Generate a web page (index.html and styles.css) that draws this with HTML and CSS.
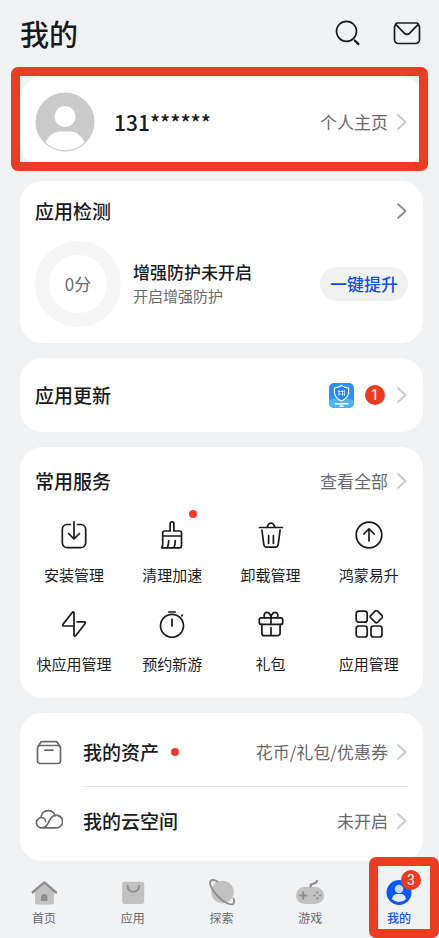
FILE: index.html
```html
<!DOCTYPE html>
<html lang="zh-CN">
<head>
<meta charset="utf-8">
<meta name="viewport" content="width=device-width, initial-scale=1">
<title>我的</title>
<link rel="stylesheet" href="styles.css">
</head>
<body>
<svg class="defs" aria-hidden="true">
  <symbol id="chevron" viewBox="0 0 12 18"><path d="M2 2l7.500 7L2 16"/></symbol>
</svg>

<header class="header">
  <h1 class="title">我的</h1>
  <div class="actions">
    <button class="icon-button" type="button" aria-label="搜索">
      <svg class="icon" viewBox="0 0 28 28"><circle cx="13.500" cy="12.300" r="10"/><path d="M21.800 21.500l3.600 3.600" stroke-width="2.200"/></svg>
    </button>
    <button class="icon-button" type="button" aria-label="消息">
      <svg class="icon" viewBox="0 0 28 28"><path d="M2.500 5.500L1.500 8v12.500a4 4 0 0 0 4 4h17a4 4 0 0 0 4-4V8l-1-2.500M4.500 4h19c1.800 0 2 1.200 1 2.200L16.500 14.300a3.500 3.500 0 0 1-5 0L3.500 6.200C2.500 5.200 2.700 4 4.500 4z"/></svg>
    </button>
  </div>
</header>

<main class="cards">
  <section class="card profile">
    <svg class="avatar" viewBox="0 0 60 60" aria-hidden="true"><circle cx="30" cy="30" r="29.500" fill="#cacaca"/><circle cx="30" cy="24.500" r="10.500" fill="#fff"/><path d="M10.500 50.500C14 43 19 39.500 25 39.500h10c6 0 11 3.500 14.500 11A28.500 28.500 0 0 1 10.500 50.500z" fill="#fff"/></svg>
    <span class="phone">131******</span>
    <a class="more" href="#home">个人主页<svg class="chevron"><use href="#chevron"/></svg></a>
    <span class="frame frame-profile"></span>
  </section>

  <section class="card check">
    <div class="card-head">
      <h2 class="heading">应用检测</h2>
      <a class="more dark" href="#check" aria-label="应用检测详情"><svg class="chevron"><use href="#chevron"/></svg></a>
    </div>
    <div class="check-body">
      <div class="ring">0分</div>
      <div class="check-text">
        <p class="check-title">增强防护未开启</p>
        <p class="check-sub">开启增强防护</p>
      </div>
      <button class="pill" type="button">一键提升</button>
    </div>
  </section>

  <section class="card update">
    <h2 class="heading">应用更新</h2>
    <a class="more update-more" href="#update" aria-label="1 个应用更新">
      <svg class="app-icon" viewBox="0 0 25 25"><rect width="25" height="25" rx="5" fill="#2d8ff0"/><path d="M0 17q12-4 25 0v3a5 5 0 0 1-5 5H5a5 5 0 0 1-5-5z" fill="#49b4fa"/><path d="M12.500 2.500q3 2.300 7 2.500v4.500c0 4-3 6.500-7 8.500-4-2-7-4.500-7-8.500V5q4-.2 7-2.500z" fill="#2383e6" stroke="#fff" stroke-width="1.200"/><path d="M10 7v6M13.500 7v6M15.500 7v6M9 8.500h7M9 11h7" stroke="#d5eaff" stroke-width=".8"/><path d="M5.500 20.700h14M10.500 23h4" stroke="#fff" stroke-width="1.500"/></svg>
      <span class="badge">1</span>
      <svg class="chevron"><use href="#chevron"/></svg>
    </a>
  </section>

  <section class="card services">
    <div class="card-head">
      <h2 class="heading">常用服务</h2>
      <a class="more" href="#all">查看全部<svg class="chevron"><use href="#chevron"/></svg></a>
    </div>
    <nav class="grid">
      <a class="service" href="#install"><svg class="icon" viewBox="0 0 28 28"><path d="M10.500 3.500H7A5 5 0 0 0 2.300 8.500v13.200a5 5 0 0 0 5 5h13.400a5 5 0 0 0 5-5V8.500A5 5 0 0 0 21 3.500h-3.500M14 .8v17M8.500 12.500L14 18l5.500-5.500"/></svg>安装管理</a>
      <a class="service" href="#clean"><svg class="icon" viewBox="0 0 28 28"><path d="M12.100 10V2.800a1.900 1.900 0 0 1 3.800 0V10h5.600a2 2 0 0 1 2 2v12.800a2 2 0 0 1-2 2H3.700q1.300-2 1-5V12a2 2 0 0 1 2-2zM4.700 15h18.800M10.700 19.500c0 3-.2 5-1.400 7M17.300 19.500c0 3-.2 5-1.400 7"/></svg>清理加速<span class="dot dot-corner"></span></a>
      <a class="service" href="#uninstall"><svg class="icon" viewBox="0 0 28 28"><path d="M2.500 6.500h23M9.800 6.500C11 6 10.200 2.200 14 2.200S17 6 18.200 6.500M4.900 9l1.900 14.500a3 3 0 0 0 3 2.600h8.400a3 3 0 0 0 3-2.600L23.100 9M11.600 14.500v8M16.400 14.500v8"/></svg>卸载管理</a>
      <a class="service" href="#upgrade"><svg class="icon" viewBox="0 0 28 28"><circle cx="14" cy="14" r="12.800"/><path d="M14 20V8M8.800 13L14 7.800l5.200 5.200"/></svg>鸿蒙易升</a>
      <a class="service" href="#quick"><svg class="icon" viewBox="0 0 28 28"><path d="M14 16H3.700c-1.200 0-1.400-.8-.8-1.600L12.300 2.500c.8-.9 1.700-.6 1.700.6v22c0 1.200.9 1.500 1.700.6l9.400-12.300c.6-.8.400-1.600-.8-1.600H17"/></svg>快应用管理</a>
      <a class="service" href="#reserve"><svg class="icon" viewBox="0 0 28 28"><circle cx="14" cy="15.800" r="11.500"/><path d="M10.800 2h6.400M14 9v7M23.800 5.800l.6-.6"/></svg>预约新游</a>
      <a class="service" href="#gift"><svg class="icon" viewBox="0 0 28 28"><rect x="2.300" y="7.800" width="23.400" height="6.600" rx="2"/><path d="M4.900 14.400v8.800a2.500 2.500 0 0 0 2.500 2.500h13.200a2.500 2.500 0 0 0 2.500-2.500v-8.800M14 7.800v6.600M14 17.500v8M7.700 7.800C6.300 5.500 7.500 2.300 10 2.300S14 5.800 14 7.800c0-2 1.500-5.500 4-5.500s3.700 3.200 2.300 5.500"/></svg>礼包</a>
      <a class="service" href="#apps"><svg class="icon" viewBox="0 0 28 28"><rect x="1.200" y="1.200" width="11" height="11" rx="2.500"/><rect x="1.200" y="16" width="11" height="11" rx="2.500"/><rect x="16" y="16" width="11" height="11" rx="2.500"/><rect x="16.600" y="1.900" width="9.600" height="9.600" rx="1.500" transform="rotate(45 21.400 6.700)"/></svg>应用管理</a>
    </nav>
  </section>

  <section class="card list">
    <a class="row" href="#assets">
      <svg class="icon gray" viewBox="0 0 28 28"><rect x="2.500" y="7.500" width="23" height="18" rx="2.500"/><path d="M3 8.500l2.500-3.800q.5-1 1.700-1h13.600q1.200 0 1.700 1L25 8.500M10 12.200h8"/></svg>
      <span class="row-body"><span class="heading">我的资产</span><span class="dot"></span><span class="more">花币/礼包/优惠券<svg class="chevron"><use href="#chevron"/></svg></span></span>
    </a>
    <a class="row" href="#cloud">
      <svg class="icon gray" viewBox="0 0 28 28"><path d="M9.500 20A5.200 5.200 0 1 1 6 10.500c2.500 0 4.300 1.600 4.600 4M6 10.500C6.300 6.200 9.300 3.700 13 3.700c3.600 0 6.300 2 7.200 5.200M8 20.800c5-.6 5.500-7.800 8.600-10.400a6.300 6.300 0 1 1 3.900 10.400H8"/></svg>
      <span class="row-body"><span class="heading">我的云空间</span><span class="more">未开启<svg class="chevron"><use href="#chevron"/></svg></span></span>
    </a>
  </section>
</main>

<nav class="tabs">
  <a class="tab" href="#t1"><svg class="tab-icon" viewBox="0 0 28 28"><path d="M5 14l9.300-7.500L24 14v10a2.500 2.500 0 0 1-2.500 2.500h-14A2.500 2.500 0 0 1 5 24z" fill="#c1c1c2"/><path d="M2.800 14.300L14.300 4.500l11.500 9.800" fill="none" stroke="#8f8f91" stroke-width="2.600" stroke-linecap="round" stroke-linejoin="round"/><path d="M11 23v-3.500a3.200 3.200 0 0 1 6.400 0V23z" fill="#8f8f91"/></svg>首页</a>
  <a class="tab" href="#t2"><svg class="tab-icon" viewBox="0 0 28 28"><rect x="3.200" y="3.700" width="22" height="22.300" rx="2.800" fill="#c1c1c2"/><path d="M8.500 8a5.800 5.800 0 0 0 11.600 0" fill="none" stroke="#8f8f91" stroke-width="2" stroke-linecap="round"/></svg>应用</a>
  <a class="tab" href="#t3"><svg class="tab-icon" viewBox="0 0 28 28"><circle cx="14.500" cy="14" r="11.300" fill="#c1c1c2"/><path d="M9.500 3.500C6 1.500 3 1.500 2.300 3.500 1.200 7 5 13.500 10 18.500s12 9.200 15 7.500c1.600-1 1.500-3 .5-5.500" fill="none" stroke="#8f8f91" stroke-width="1.800" stroke-linecap="round"/></svg>探索</a>
  <a class="tab" href="#t4"><svg class="tab-icon" viewBox="0 0 28 28"><rect x="0" y="9" width="28" height="17" rx="8.500" fill="#c1c1c2"/><path d="M14.500 8.500c-.5-5 6-1 6.500-5.500" fill="none" stroke="#8f8f91" stroke-width="2.200" stroke-linecap="round"/><path d="M4 17.500h6.400M7.200 14.300v6.400" stroke="#8f8f91" stroke-width="2" stroke-linecap="round"/><g fill="#8f8f91"><circle cx="21.300" cy="14.600" r="1.100"/><circle cx="21.300" cy="20.400" r="1.100"/><circle cx="18.400" cy="17.500" r="1.100"/><circle cx="24.200" cy="17.500" r="1.100"/></g></svg>游戏</a>
  <a class="tab active" href="#t5" aria-current="page"><svg class="tab-icon" viewBox="0 0 28 28"><circle cx="14" cy="14.500" r="12.500" fill="#0a59f7"/><circle cx="14" cy="11" r="4.300" fill="#c5d8fb"/><path d="M6.800 21q1.500-5 5.200-5h4q3.700 0 5.200 5-3 3-7.200 3t-7.200-3z" fill="#e3ecfd"/></svg>我的<span class="badge badge-tab">3</span></a>
  <span class="frame frame-tab"></span>
</nav>
</body>
</html>
```
FILE: styles.css
```css
* {
  box-sizing: border-box;
}

body {
  margin: 0;
  background: #f1f2f4;
  color: #191a1c;
  font-family: "Noto Sans CJK SC", sans-serif;
  font-size: 15px;
  line-height: 20px;
}

a {
  color: inherit;
  text-decoration: none;
}

button {
  border: 0;
  padding: 0;
  font: inherit;
  color: inherit;
  cursor: pointer;
}

h1,
h2,
p {
  margin: 0;
}

.defs {
  display: none;
}

.icon {
  display: block;
  flex: none;
  width: 28px;
  height: 28px;
  fill: none;
  stroke: currentColor;
  stroke-width: 1.7;
  stroke-linecap: round;
  stroke-linejoin: round;
}

.icon.gray {
  color: #68696b;
}

.header {
  display: flex;
  align-items: center;
  justify-content: space-between;
  height: 67px;
  padding: 0 18px 2px 20px;
}

.title {
  font-size: 29px;
  line-height: 40px;
  font-weight: 500;
}

.actions {
  display: flex;
  gap: 32px;
}

.icon-button {
  background: none;
}

.cards {
  display: flex;
  flex-direction: column;
  gap: 15px;
  padding: 10px 16px 0 20px;
}

.card {
  position: relative;
  border-radius: 22px;
  background: #fff;
}

.heading {
  font-size: 19px;
  line-height: 30px;
  font-weight: 500;
}

.more {
  display: flex;
  align-items: center;
  gap: 8px;
  margin-left: auto;
  color: #68696b;
  font-size: 17px;
  line-height: 24px;
}

.chevron {
  width: 12px;
  height: 18px;
  fill: none;
  stroke: #c7c7c8;
  stroke-width: 1.8;
  stroke-linecap: round;
  stroke-linejoin: round;
}

.dark .chevron {
  stroke: #8f8f91;
}

.badge {
  width: 20px;
  height: 20px;
  border-radius: 50%;
  background: #e93b20;
  color: #fff;
  font-family: Roboto, sans-serif;
  font-size: 14px;
  font-weight: 400;
  line-height: 20px;
  text-align: center;
}

.dot {
  width: 8px;
  height: 8px;
  border-radius: 50%;
  background: #f23a2c;
}

.frame {
  position: absolute;
  border: 9px solid #ea3e24;
  border-radius: 7px;
  pointer-events: none;
}

.profile {
  display: flex;
  align-items: center;
  padding: 15px 15px 14px;
}

.avatar {
  width: 60px;
  height: 60px;
}

.phone {
  margin-left: 19px;
  font-size: 21px;
  line-height: 30px;
  font-weight: 500;
}

.frame-profile {
  inset: -10px -5px -5px -9px;
}

.card-head {
  display: flex;
  align-items: center;
}

.check {
  padding: 15px 15px 16px;
}

.check-body {
  display: flex;
  align-items: center;
  gap: 12px;
  margin-top: 15px;
}

.ring {
  width: 86px;
  height: 86px;
  border: 14px solid #f6f6f6;
  border-radius: 50%;
  color: #68696b;
  font-size: 17px;
  line-height: 58px;
  text-align: center;
}

.check-title {
  font-size: 17px;
  line-height: 24px;
  font-weight: 500;
}

.check-sub {
  color: #68696b;
  line-height: 24px;
}

.pill {
  width: 88px;
  height: 34px;
  margin-left: auto;
  border-radius: 17px;
  background: #f2f2f3;
  color: #0a50e8;
  font-size: 17px;
  font-weight: 500;
}

.update {
  display: flex;
  align-items: center;
  padding: 22px 15px;
}

.update-more {
  gap: 11px;
}

.app-icon {
  width: 25px;
  height: 25px;
}

.services {
  padding: 19px 0 24px;
}

.services .card-head {
  padding: 0 15px;
}

.grid {
  display: grid;
  grid-template-columns: repeat(4, 1fr);
  row-gap: 25px;
  margin-top: 25px;
  padding: 0 5px;
}

.service {
  position: relative;
  display: flex;
  flex-direction: column;
  align-items: center;
  gap: 16px;
}

.dot-corner {
  position: absolute;
  top: -11px;
  left: 50%;
  margin-left: 17px;
}

.list {
  padding: 4px 15px 6px;
}

.row {
  display: flex;
  align-items: center;
  gap: 20px;
}

.row-body {
  display: flex;
  flex: 1;
  align-items: center;
  gap: 12px;
  height: 69px;
}

.row + .row .row-body {
  border-top: 1px solid #e5e5e6;
}

.tabs {
  position: relative;
  display: flex;
  justify-content: space-between;
  padding: 17px 10px 12px 14px;
}

.tab {
  position: relative;
  display: flex;
  flex-direction: column;
  align-items: center;
  gap: 4px;
  width: 60px;
  color: #68696b;
  font-size: 12px;
  line-height: 16px;
}

.tab-icon {
  width: 28px;
  height: 28px;
}

.active {
  color: #0a59f7;
  font-weight: 500;
}

.badge-tab {
  position: absolute;
  top: -8px;
  left: 32px;
}

.frame-tab {
  top: -4px;
  right: 0;
  bottom: 0;
  width: 70px;
}
```
